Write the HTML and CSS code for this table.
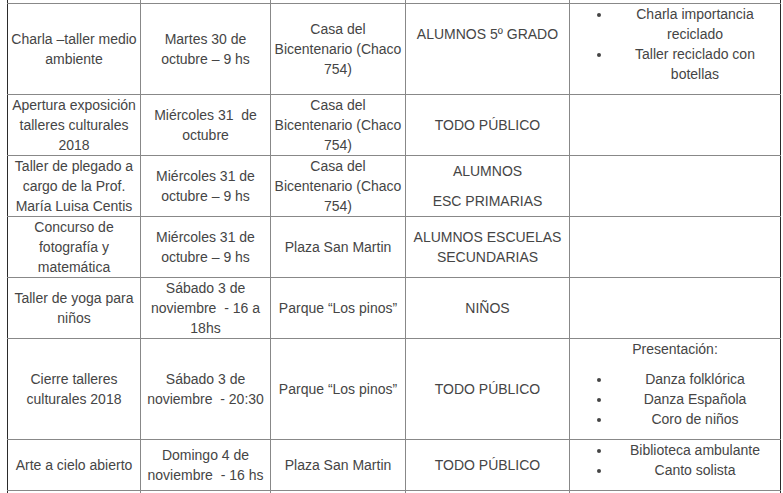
FILE: index.html
```html
<!DOCTYPE html>
<html lang="es">
<head>
<meta charset="utf-8">
<title>Agenda de actividades</title>
<link rel="stylesheet" href="styles.css">
</head>
<body>
<div class="page">
<table class="agenda">
  <colgroup>
    <col class="c1"><col class="c2"><col class="c3"><col class="c4"><col class="c5">
  </colgroup>
  <tbody>
    <tr class="cut"><td></td><td></td><td></td><td></td><td></td></tr>
    <tr>
      <td>Charla –taller medio ambiente</td>
      <td>Martes 30 de octubre – 9 hs</td>
      <td>Casa del Bicentenario (Chaco 754)</td>
      <td><p>ALUMNOS 5º GRADO</p><p class="gap">&nbsp;</p></td>
      <td><ul><li>Charla importancia reciclado</li><li>Taller reciclado con botellas</li></ul></td>
    </tr>
    <tr>
      <td>Apertura exposición talleres culturales 2018</td>
      <td>Miércoles 31&nbsp; de octubre</td>
      <td>Casa del Bicentenario (Chaco 754)</td>
      <td>TODO PÚBLICO</td>
      <td></td>
    </tr>
    <tr>
      <td>Taller de plegado a cargo de la Prof. María Luisa Centis</td>
      <td>Miércoles 31 de octubre – 9 hs</td>
      <td>Casa del Bicentenario (Chaco 754)</td>
      <td><p>ALUMNOS</p><p class="gap">ESC PRIMARIAS</p></td>
      <td></td>
    </tr>
    <tr>
      <td>Concurso de fotografía y matemática</td>
      <td>Miércoles 31 de octubre – 9 hs</td>
      <td>Plaza San Martin</td>
      <td>ALUMNOS ESCUELAS SECUNDARIAS</td>
      <td></td>
    </tr>
    <tr>
      <td>Taller de yoga para niños</td>
      <td>Sábado 3 de noviembre&nbsp; - 16 a 18hs</td>
      <td>Parque “Los pinos”</td>
      <td>NIÑOS</td>
      <td></td>
    </tr>
    <tr>
      <td>Cierre talleres culturales 2018</td>
      <td>Sábado 3 de noviembre&nbsp; - 20:30</td>
      <td>Parque “Los pinos”</td>
      <td>TODO PÚBLICO</td>
      <td><p class="lead">Presentación:</p><ul><li>Danza folklórica</li><li>Danza Española</li><li>Coro de niños</li></ul></td>
    </tr>
    <tr>
      <td>Arte a cielo abierto</td>
      <td>Domingo 4 de noviembre&nbsp; - 16 hs</td>
      <td>Plaza San Martin</td>
      <td>TODO PÚBLICO</td>
      <td><ul><li>Biblioteca ambulante</li><li>Canto solista</li></ul></td>
    </tr>
    <tr class="cut"><td></td><td></td><td></td><td></td><td></td></tr>
  </tbody>
</table>
</div>
</body>
</html>
```

FILE: styles.css
```css
html, body {
  margin: 0;
  padding: 0;
  overflow: hidden;
  background: #ffffff;
}

body {
  font-family: "Liberation Sans", Arial, sans-serif;
  font-size: 14px;
  line-height: 20px;
  color: #454545;
}

.page {
  padding-left: 7px;
}

.agenda {
  border-collapse: collapse;
  table-layout: fixed;
  width: 773px;
}

.c1 { width: 133px; }
.c2 { width: 130px; }
.c3 { width: 135px; }
.c4 { width: 164px; }
.c5 { width: 211px; }

.agenda td {
  border: 1px solid #888888;
  padding: 0 2px;
  text-align: center;
  vertical-align: middle;
}

.agenda td:first-child {
  border-left-color: #2b2b2b;
}

.agenda td:last-child {
  border-right-color: #2b2b2b;
}

.agenda tr.cut td {
  height: 3px;
  padding: 0;
  border-top: 0;
}

.agenda tr.cut:last-child td {
  border-bottom: 0;
  height: 10px;
}

.agenda p {
  margin: 0;
}

.agenda p.gap {
  margin-top: 10px;
}

.agenda p.lead {
  margin-bottom: 10px;
}

.agenda ul {
  margin: 0 0 10px;
  padding-left: 40px;
}
```
